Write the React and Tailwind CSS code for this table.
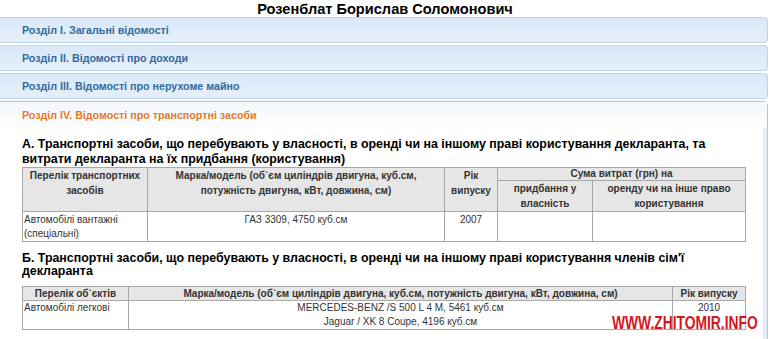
import React from 'react';

const sections = [
  'Розділ I. Загальні відомості',
  'Розділ II. Відомості про доходи',
  'Розділ III. Відомості про нерухоме майно',
];

const th = 'border border-[#a8a8a8] bg-[#e6e6e6] font-bold text-[#333] text-center align-top px-[2px] leading-[15px]';
const td = 'border border-[#a8a8a8] text-[#333] align-top px-[1px] leading-[14px]';

const App = () => {
  return (
    <div className="relative w-[770px] h-[339px] overflow-hidden bg-white font-['Liberation_Sans',Arial,sans-serif]">
      <h1 className="h-[17px] text-center text-[14.6px] leading-[18px] font-bold text-black">
        Розенблат Борислав Соломонович
      </h1>

      <div className="flex flex-col gap-[2px] pr-[2px]">
        {sections.map((s) => (
          <div
            key={s}
            className="h-[26px] flex items-center pl-[22px] text-[10.7px] font-bold text-[#336a9c] bg-gradient-to-b from-[#d9e8f8] to-[#e5eff9] border border-l-0 border-[#bcd4ec] rounded-r-[4px]"
          >
            {s}
          </div>
        ))}

        {/* active section */}
        <div className="border border-l-0 border-[#aac8e6] rounded-tr-[5px] bg-white">
          <div className="h-[26px] flex items-center pl-[22px] text-[10.7px] font-bold text-[#e7781d] bg-gradient-to-b from-[#f5f8fc] to-[#fbfdfe]">
            Розділ IV. Відомості про транспортні засоби
          </div>
          <div className="border-r-[4px] border-[#e4eef9] pl-[22px] pt-[9px] pb-[20px] text-[10px]">
            <h3 className="text-[12.4px] leading-[15px] font-bold text-black">
              А. Транспортні засоби, що перебувають у власності, в оренді чи на іншому праві користування декларанта, та
              <br />
              витрати декларанта на їх придбання (користування)
            </h3>
            <table className="border-collapse table-fixed w-[723px]">
              <colgroup>
                <col className="w-[125px]" />
                <col className="w-[297px]" />
                <col className="w-[53px]" />
                <col className="w-[95px]" />
                <col className="w-[153px]" />
              </colgroup>
              <thead>
                <tr className="h-[13px]">
                  <th rowSpan={2} className={th}>Перелік транспортних засобів</th>
                  <th rowSpan={2} className={th}>Марка/модель (об`єм циліндрів двигуна, куб.см, потужність двигуна, кВт, довжина, см)</th>
                  <th rowSpan={2} className={th}>Рік випуску</th>
                  <th colSpan={2} className={`${th} !leading-[12px]`}>Сума витрат (грн) на</th>
                </tr>
                <tr className="h-[30px]">
                  <th className={th}>придбання у власність</th>
                  <th className={th}>оренду чи на інше право користування</th>
                </tr>
              </thead>
              <tbody>
                <tr className="h-[29px]">
                  <td className={`${td} pt-[1px]`}>Автомобілі вантажні (спеціальні)</td>
                  <td className={`${td} text-center pt-[1px]`}>ГАЗ 3309, 4750 куб.см</td>
                  <td className={`${td} text-center pt-[1px]`}>2007</td>
                  <td className={td}></td>
                  <td className={td}></td>
                </tr>
              </tbody>
            </table>

            <h3 className="mt-[10px] mb-[8px] text-[12.4px] leading-[13px] font-bold text-black">
              Б. Транспортні засоби, що перебувають у власності, в оренді чи на іншому праві користування членів сім'ї
              <br />
              декларанта
            </h3>
            <table className="border-collapse table-fixed w-[723px]">
              <colgroup>
                <col className="w-[106px]" />
                <col className="w-[544px]" />
                <col className="w-[73px]" />
              </colgroup>
              <thead>
                <tr className="h-[14px]">
                  <th className={`${th} !leading-[13px]`}>Перелік об`єктів</th>
                  <th className={`${th} !leading-[13px]`}>Марка/модель (об`єм циліндрів двигуна, куб.см, потужність двигуна, кВт, довжина, см)</th>
                  <th className={`${th} !leading-[13px]`}>Рік випуску</th>
                </tr>
              </thead>
              <tbody>
                <tr className="h-[28px]">
                  <td className={td}>Автомобілі легкові</td>
                  <td className={`${td} text-center`}>
                    MERCEDES-BENZ /S 500 L 4 M, 5461 куб.см
                    <br />
                    Jaguar / XK 8 Coupe, 4196 куб.см
                  </td>
                  <td className={`${td} text-center`}>2010</td>
                </tr>
              </tbody>
            </table>
          </div>
        </div>
      </div>

      <div className="absolute left-[612px] top-[313px] origin-left scale-x-[0.79] text-[17.5px] leading-[20px] font-bold text-[#d3151c] whitespace-nowrap">
        WWW.ZHITOMIR.INFO
      </div>
    </div>
  );
};

export default App;
